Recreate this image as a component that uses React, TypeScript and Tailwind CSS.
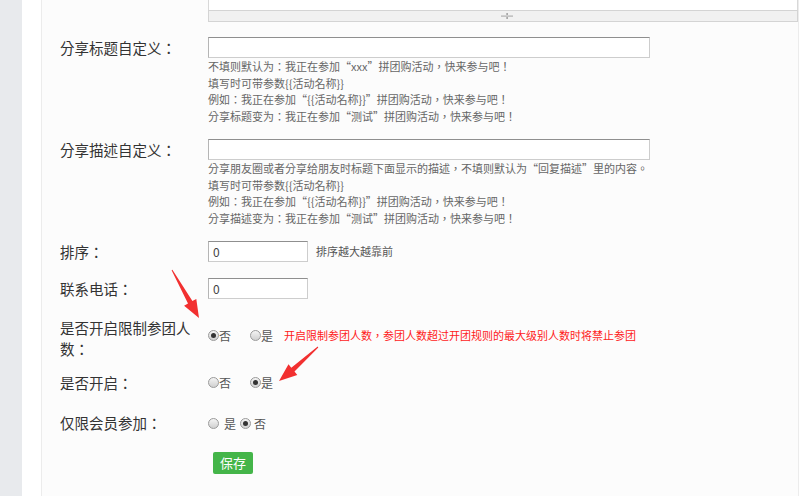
import React from "react";

const font = { fontFamily: '"Noto Sans CJK TC", "Noto Sans CJK SC", "Liberation Sans", sans-serif' };

function Radio({ checked }: { checked?: boolean }) {
  return (
    <span className="inline-flex items-center justify-center w-[11px] h-[11px] rounded-full border border-[#9a9a9a] bg-gradient-to-b from-[#f4f4f4] to-[#d0d0d0] shrink-0">
      {checked && <span className="w-[5px] h-[5px] rounded-full bg-[#333]" />}
    </span>
  );
}

function Label({ children }: { children: React.ReactNode }) {
  return <div className="w-[148px] shrink-0 pr-[8px] text-[14.5px] leading-[21px] text-[#333]">{children}</div>;
}

function TextInput({ className, value }: { className: string; value?: string }) {
  return (
    <div className={`h-[21px] bg-white border border-[#cdcdcd] border-t-[#8f8f8f] border-l-[#b5b5b5] flex items-center pl-[4px] text-[12px] text-[#444] ${className}`}>
      {value}
    </div>
  );
}

function Help({ lines }: { lines: string[] }) {
  return (
    <div className="text-[11px] leading-[16.5px] text-[#666] whitespace-nowrap">
      {lines.map((l) => (
        <div key={l}>{l}</div>
      ))}
    </div>
  );
}

function Arrows() {
  return (
    <svg className="absolute inset-0 pointer-events-none" width="800" height="496" viewBox="0 0 800 496">
      <polygon
        fill="#f23030"
        points="171.6,270.2 188.0,303.5 184.1,305.7 199,318 196.3,298.9 192.4,301.1 172.4,269.8"
      />
      <polygon
        fill="#f23030"
        points="317.7,346.6 291.3,367.7 288.5,364.2 279,381 297.3,375.0 294.5,371.5 318.3,347.4"
      />
    </svg>
  );
}

export default function App() {
  return (
    <div className="relative w-[800px] h-[496px] overflow-hidden flex bg-white" style={font}>
      <div className="w-[22px] shrink-0 bg-[#e8eaed]" />
      <div className="w-[19px] shrink-0 bg-white" />
      <div className="flex-1 border-l border-[#ececec] border-r bg-[#fcfcfc] pl-[18px] mr-[1px] flex flex-col">
        {/* editor bottom */}
        <div className="ml-[148px]">
          <div className="h-[10px] bg-white border-x border-[#d8d8d8]" />
          <div className="h-[12px] bg-[#f1f1f1] border border-[#d4d4d4] flex items-center justify-center pl-[8px]">
            <svg width="14" height="8" viewBox="0 0 14 8">
              <rect x="1" y="3.5" width="12" height="1.2" fill="#b0b0b0" />
              <rect x="6.5" y="1" width="1.2" height="2" fill="#888" />
              <rect x="6.5" y="5" width="1.2" height="2" fill="#888" />
            </svg>
          </div>
        </div>

        <div className="flex mt-[15px]">
          <Label>分享标题自定义：</Label>
          <div>
            <TextInput className="w-[442px]" />
            <Help
              lines={[
                "不填则默认为：我正在参加“xxx”拼团购活动，快来参与吧！",
                "填写时可带参数{{活动名称}}",
                "例如：我正在参加“{{活动名称}}”拼团购活动，快来参与吧！",
                "分享标题变为：我正在参加“测试”拼团购活动，快来参与吧！",
              ]}
            />
          </div>
        </div>

        <div className="flex mt-[15px]">
          <Label>分享描述自定义：</Label>
          <div>
            <TextInput className="w-[442px]" />
            <Help
              lines={[
                "分享朋友圈或者分享给朋友时标题下面显示的描述，不填则默认为“回复描述”里的内容。",
                "填写时可带参数{{活动名称}}",
                "例如：我正在参加“{{活动名称}}”拼团购活动，快来参与吧！",
                "分享描述变为：我正在参加“测试”拼团购活动，快来参与吧！",
              ]}
            />
          </div>
        </div>

        <div className="flex mt-[15px] items-center">
          <Label>排序：</Label>
          <TextInput className="w-[100px]" value="0" />
          <span className="ml-[8px] text-[11px] text-[#555]">排序越大越靠前</span>
        </div>

        <div className="flex mt-[16px] items-center">
          <Label>联系电话：</Label>
          <TextInput className="w-[100px]" value="0" />
        </div>

        <div className="flex mt-[18px]">
          <Label>是否开启限制参团人数：</Label>
          <div className="pt-[8px] h-[29px] flex items-center text-[12px] text-[#555]">
            <Radio checked />
            <span>否</span>
            <span className="ml-[19px]" />
            <Radio />
            <span>是</span>
            <span className="ml-[11px] text-[11px] text-[#ff1a1a] whitespace-nowrap">
              开启限制参团人数，参团人数超过开团规则的最大级别人数时将禁止参团
            </span>
          </div>
        </div>

        <div className="flex mt-[13px] items-center">
          <Label>是否开启：</Label>
          <div className="flex items-center text-[12px] text-[#555]">
            <Radio />
            <span>否</span>
            <span className="ml-[19px]" />
            <Radio checked />
            <span>是</span>
          </div>
        </div>

        <div className="flex mt-[19px] items-center">
          <Label>仅限会员参加：</Label>
          <div className="flex items-center text-[12px] text-[#555] pt-[2px]">
            <Radio />
            <span className="ml-[5px]">是</span>
            <span className="ml-[4px]" />
            <Radio checked />
            <span className="ml-[3px]">否</span>
          </div>
        </div>

        <div className="mt-[16px] ml-[153px]">
          <button className="w-[40px] h-[22px] bg-[#44b549] rounded-[2px] text-white text-[13px] leading-[22px]">
            保存
          </button>
        </div>
      </div>
      <Arrows />
    </div>
  );
}
